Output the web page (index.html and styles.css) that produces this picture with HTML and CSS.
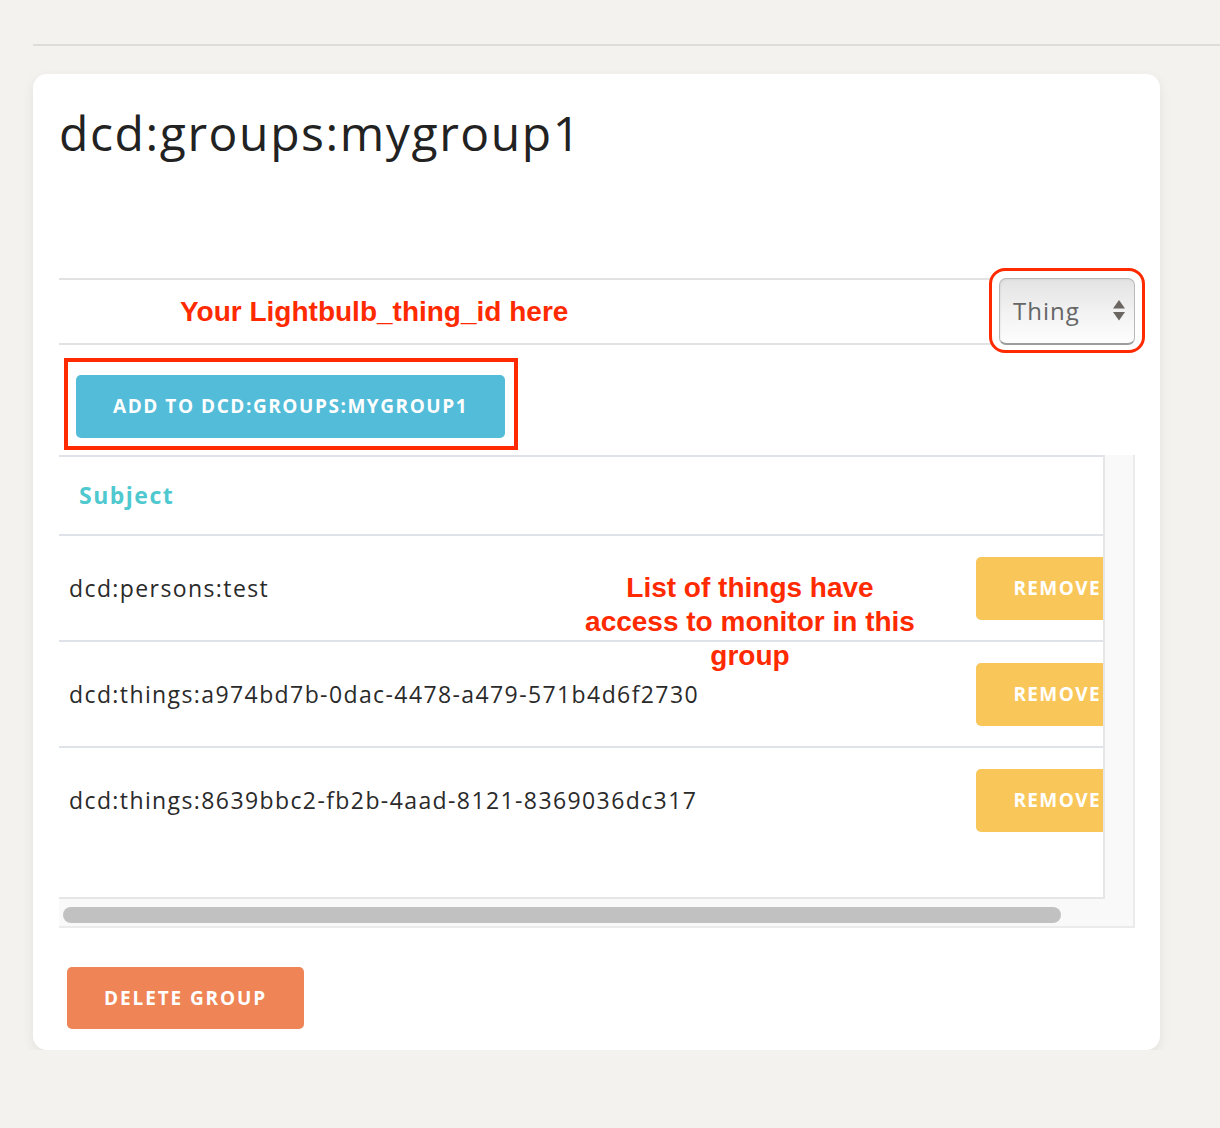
FILE: index.html
```html
<!DOCTYPE html>
<html lang="en">
<head>
<meta charset="utf-8">
<title>dcd:groups:mygroup1</title>
<link rel="stylesheet" href="styles.css">
</head>
<body>
<div class="topline"></div>
<div class="card">
  <h1 class="title">dcd:groups:mygroup1</h1>

  <div class="form-row">
    <div class="input"></div>
    <div class="select">
      <span>Thing</span>
      <svg class="select-arrows" width="12" height="21" viewBox="0 0 12 21">
        <polygon points="6,0 12,8.5 0,8.5"/>
        <polygon points="0,12 12,12 6,20.5"/>
      </svg>
    </div>
  </div>

  <div class="add-row">
    <button class="btn btn-add">ADD TO DCD:GROUPS:MYGROUP1</button>
  </div>

  <div class="scroller">
    <div class="viewport">
      <table class="members">
        <thead>
          <tr><th colspan="2">Subject</th></tr>
        </thead>
        <tbody>
          <tr>
            <td class="subject">dcd:persons:test</td>
            <td class="action"><button class="btn btn-remove">REMOVE</button></td>
          </tr>
          <tr>
            <td class="subject">dcd:things:a974bd7b-0dac-4478-a479-571b4d6f2730</td>
            <td class="action"><button class="btn btn-remove">REMOVE</button></td>
          </tr>
          <tr>
            <td class="subject">dcd:things:8639bbc2-fb2b-4aad-8121-8369036dc317</td>
            <td class="action"><button class="btn btn-remove">REMOVE</button></td>
          </tr>
        </tbody>
      </table>
    </div>
    <div class="vgutter"></div>
    <div class="htrack"><div class="thumb"></div></div>
  </div>

  <div class="delete-row">
    <button class="btn btn-delete">DELETE GROUP</button>
  </div>

  <div class="note note-input">Your Lightbulb_thing_id here</div>
  <div class="note note-list">List of things have<br>access to monitor in this<br>group</div>
  <div class="mark mark-select"></div>
  <div class="mark mark-add"></div>
</div>
</body>
</html>
```

FILE: styles.css
```css
body {
  margin: 0;
  background: #f3f2ee;
  font-family: "Open Sans", "DejaVu Sans", sans-serif;
}

.topline {
  margin: 44px 0 0 33px;
  height: 2px;
  background: #dddcd8;
}

.card {
  position: relative;
  margin: 28px 0 0 33px;
  width: 1127px;
  box-sizing: border-box;
  padding: 30px 25px 21px 26px;
  background: #fff;
  border-radius: 14px;
  box-shadow: 0 4px 12px rgba(0, 0, 0, 0.07);
}

.title {
  margin: 0 0 116px;
  font-size: 48px;
  font-weight: 400;
  line-height: 57.6px;
  letter-spacing: 1.6px;
  color: #222;
}

/* form row */
.form-row {
  display: flex;
  gap: 8px;
  height: 67px;
}

.input {
  flex: 1;
  border-top: 2px solid #e2e2e2;
  border-bottom: 2px solid #e2e2e2;
}

.select {
  width: 136px;
  box-sizing: border-box;
  display: flex;
  align-items: center;
  justify-content: space-between;
  padding: 0 9px 0 13px;
  border: 1px solid #b8b8b8;
  border-bottom: 2px solid #9c9c9c;
  border-radius: 7px;
  background: linear-gradient(#e3e3e3, #f3f3f3 55%, #fdfdfd);
  box-shadow: inset 1px 1px 2px rgba(0, 0, 0, 0.05);
  color: #666;
  font-size: 24px;
  letter-spacing: 1px;
}

.select-arrows {
  fill: #6b6661;
}

/* buttons */
.btn {
  border: 0;
  border-radius: 5px;
  color: #fff;
  font-family: "Open Sans", "DejaVu Sans", sans-serif;
  font-weight: 700;
  font-size: 19px;
  letter-spacing: 1.4px;
  height: 63px;
  padding: 0 37px;
  white-space: nowrap;
}

.add-row {
  padding: 30px 0 17px 17px;
}

.btn-add {
  background: #52bcd9;
  letter-spacing: 1.55px;
}

.btn-remove {
  background: #f9c65a;
}

.btn-delete {
  background: #ef8457;
  height: 62px;
  letter-spacing: 1.9px;
}

.delete-row {
  padding: 39px 0 0 8px;
}

/* scroll container */
.scroller {
  display: grid;
  grid-template-columns: 1fr 28px;
  grid-template-rows: 444px 27px;
  background: #f9f9f9;
  border-right: 2px solid #ebebeb;
  border-bottom: 2px solid #ebebeb;
}

.viewport {
  overflow: hidden;
  background: #fff;
  border-right: 2px solid #e6e6e6;
  border-bottom: 2px solid #e6e6e6;
}

.htrack {
  grid-column: 1 / 3;
}

.thumb {
  margin: 8px 0 0 4px;
  width: 998px;
  height: 16px;
  border-radius: 8px;
  background: #c1c1c1;
}

.members {
  width: 1090px;
  border-collapse: separate;
  border-spacing: 0;
}

.members th {
  text-align: left;
  padding: 0 20px;
  line-height: 77px;
  border-top: 2px solid #dfe2e6;
  border-bottom: 2px solid #dfe2e6;
  color: #4fc9cf;
  font-size: 23px;
  font-weight: 700;
  letter-spacing: 1.5px;
}

.members td {
  padding: 21px 11px 20px 10px;
  border-bottom: 2px solid #dfe2e6;
  vertical-align: middle;
}

.members tr:last-child td {
  border-bottom: 0;
}

.subject {
  font-size: 23px;
  letter-spacing: 1.4px;
  color: #2a2a2a;
}

.action {
  text-align: right;
}

/* annotations drawn over the screenshot */
.note {
  position: absolute;
  color: #ff2a00;
  font-family: "Liberation Sans", Arial, sans-serif;
  font-weight: 700;
  font-size: 28px;
  line-height: 34px;
}

.note-input {
  left: 147px;
  top: 221px;
}

.note-list {
  left: 537px;
  top: 497px;
  width: 360px;
  text-align: center;
}

.mark {
  position: absolute;
  box-sizing: border-box;
  border: 3px solid #ff2a00;
}

.mark-select {
  left: 956px;
  top: 194px;
  width: 156px;
  height: 85px;
  border-radius: 16px;
}

.mark-add {
  left: 31px;
  top: 284px;
  width: 454px;
  height: 92px;
  border-width: 4px;
}
```
